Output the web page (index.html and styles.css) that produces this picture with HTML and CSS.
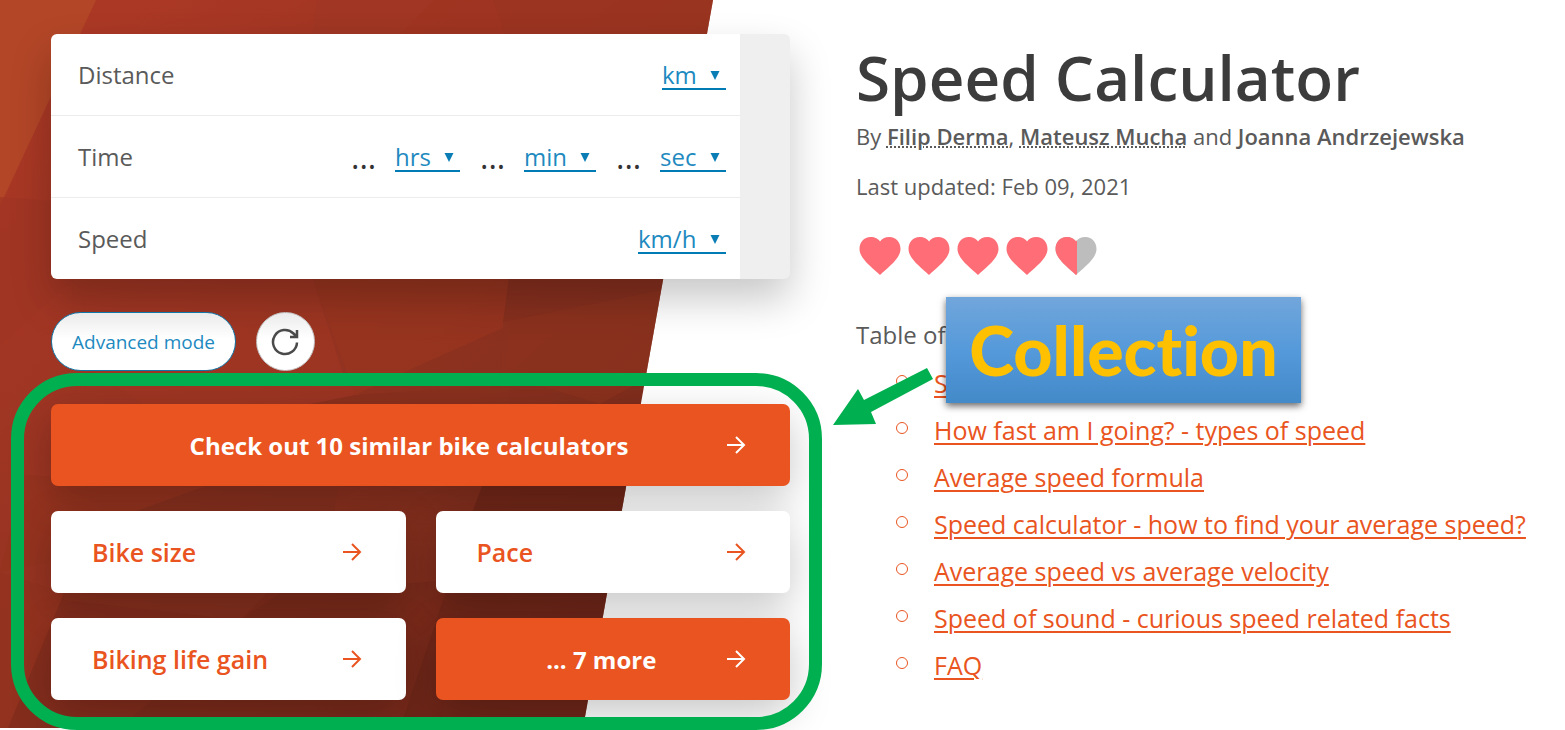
FILE: index.html
```html
<!DOCTYPE html>
<html lang="en">
<head>
<meta charset="utf-8">
<meta name="viewport" content="width=device-width, initial-scale=1">
<title>Speed Calculator</title>
<link rel="stylesheet" href="styles.css">
</head>
<body>
<svg class="symbols" aria-hidden="true">
  <symbol id="arrow" viewBox="0 0 20 20"><path d="M1 10H18M10 2l8 8-8 8" fill="none" stroke="currentColor" stroke-width="2"/></symbol>
  <symbol id="heart" viewBox="0 0 42 38"><path d="M21 38C14 31 0.500 22 0.500 12C0.500 5 5 0 11.500 0C16 0 19.500 2 21 4.500C22.500 2 26 0 30.500 0C37 0 41.500 5 41.500 12C41.500 22 28 31 21 38Z"/></symbol>
  <symbol id="caret" viewBox="0 0 10 9"><path d="M0.500 0H9.500L5 9Z" fill="currentColor"/></symbol>
</svg>
<main class="page">
  <svg class="backdrop" viewBox="0 0 713 728" preserveAspectRatio="none" aria-hidden="true">
    <defs>
      <linearGradient id="base" gradientUnits="userSpaceOnUse" x1="60" y1="60" x2="600" y2="640">
        <stop offset="0" stop-color="#ab3825"/><stop offset=".4" stop-color="#9a3422"/><stop offset=".7" stop-color="#87301e"/><stop offset="1" stop-color="#752a1b"/>
      </linearGradient>
      <clipPath id="edge"><path d="M0 0H713L583 728H0Z"/></clipPath>
    </defs>
    <g clip-path="url(#edge)">
      <path d="M0 0H713V728H0Z" fill="url(#base)"/>
      <path d="M0 0H96L5 195L0 205Z" fill="#b34627"/>
      <g opacity=".7">
        <path d="M317 0H435L400 34L340 120H300Z" fill="#a03724"/>
        <path d="M435 0H493L505 34V100H340L400 34Z" fill="#9f3421"/>
        <path d="M493 0H713V34H646L690 0L646 34H505Z" fill="#9b3421"/>
        <path d="M0 197L51 201L150 230L62 290L0 345Z" fill="#a03523"/>
        <path d="M310 270L345 380L360 395L200 440L75 360L72 270Z" fill="#a03623"/>
        <path d="M510 270L503 328L400 374L355 395L310 270Z" fill="#99351f"/>
        <path d="M503 322L670 288L655 374L600 404L501 374Z" fill="#8c321f"/>
        <path d="M503 322L510 270H670V288Z" fill="#852f1e"/>
        <path d="M355 395L501 386V404L339 500L310 404Z" fill="#89301e"/>
        <path d="M24 475L206 486L60 560L0 572Z" fill="#94331f"/>
        <path d="M0 572L64 593L8 728H0Z" fill="#93321f"/>
        <path d="M8 728L64 593L280 593L240 620L120 728Z" fill="#802c1c"/>
        <path d="M206 486L339 487L330 530L240 620L64 600L55 540Z" fill="#84301e"/>
        <path d="M482 486H640L610 728H400L440 600Z" fill="#6c2518"/>
        <path d="M280 593L450 580L400 728H120L240 620Z" fill="#782a1b"/>
      </g>
    </g>
  </svg>

  <section class="tool" aria-label="Calculator">
    <form class="calculator">
      <div class="row">
        <label for="distance-unit">Distance</label>
        <span class="unit"><select id="distance-unit"><option>km</option></select><svg><use href="#caret"/></svg></span>
      </div>
      <div class="row">
        <label for="hours">Time</label>
        <span class="times">
          <input class="value" id="hours" placeholder="..." aria-label="Hours">
          <span class="unit"><select aria-label="Hours unit"><option>hrs</option></select><svg><use href="#caret"/></svg></span>
          <input class="value" placeholder="..." aria-label="Minutes">
          <span class="unit"><select aria-label="Minutes unit"><option>min</option></select><svg><use href="#caret"/></svg></span>
          <input class="value" placeholder="..." aria-label="Seconds">
          <span class="unit"><select aria-label="Seconds unit"><option>sec</option></select><svg><use href="#caret"/></svg></span>
        </span>
      </div>
      <div class="row">
        <label for="speed-unit">Speed</label>
        <span class="unit"><select id="speed-unit"><option>km/h</option></select><svg><use href="#caret"/></svg></span>
      </div>
    </form>

    <div class="actions">
      <button class="mode" type="button">Advanced mode</button>
      <button class="reload" type="button" aria-label="Reset">
        <svg viewBox="0 0 28 28" fill="none" stroke="#4a4a4a" stroke-width="2.500"><path d="M26 14.500A12 12 0 1 1 22.500 5.500L25.500 8.500M26 2V9H19"/></svg>
      </button>
    </div>

    <nav class="collection" aria-label="Similar calculators">
      <a class="tile tile-main tile-wide" href="#all"><span>Check out 10 similar bike calculators</span><svg><use href="#arrow"/></svg></a>
      <a class="tile" href="#bike-size"><span>Bike size</span><svg><use href="#arrow"/></svg></a>
      <a class="tile" href="#pace"><span>Pace</span><svg><use href="#arrow"/></svg></a>
      <a class="tile" href="#life-gain"><span>Biking life gain</span><svg><use href="#arrow"/></svg></a>
      <a class="tile tile-main" href="#more"><span>... 7 more</span><svg><use href="#arrow"/></svg></a>
      <div class="outline"></div>
    </nav>
  </section>

  <article class="article">
    <h1>Speed Calculator</h1>
    <p class="meta">By <a href="#filip">Filip Derma</a>, <a href="#mateusz">Mateusz Mucha</a> and <strong>Joanna Andrzejewska</strong></p>
    <p class="meta updated">Last updated: Feb 09, 2021</p>
    <div class="rating" role="img" aria-label="Rating 4.5 of 5">
      <svg><use href="#heart"/></svg>
      <svg><use href="#heart"/></svg>
      <svg><use href="#heart"/></svg>
      <svg><use href="#heart"/></svg>
      <svg viewBox="0 0 42 38"><clipPath id="half"><path d="M0 0H22V38H0Z"/></clipPath><use href="#heart" fill="#bdbdbd"/><g clip-path="url(#half)"><use href="#heart"/></g></svg>
    </div>
    <div class="contents">
      <h2>Table of contents:</h2>
      <ul>
        <li><a href="#s1">Speed definition</a></li>
        <li><a href="#s2">How fast am I going? - types of speed</a></li>
        <li><a href="#s3">Average speed formula</a></li>
        <li><a href="#s4">Speed calculator - how to find your average speed?</a></li>
        <li><a href="#s5">Average speed vs average velocity</a></li>
        <li><a href="#s6">Speed of sound - curious speed related facts</a></li>
        <li><a href="#s7">FAQ</a></li>
      </ul>
      <div class="callout">Collection</div>
      <svg class="pointer" viewBox="0 0 100 58" aria-hidden="true"><path d="M0 58L25 22L31 33L94 1L100 12L38 45L43 57Z" fill="#00b050"/></svg>
    </div>
  </article>
</main>
</body>
</html>
```

FILE: styles.css
```css
*, *::before { box-sizing: border-box; }

body {
  min-height: 100vh;
  margin: 0;
  background: #fff;
  color: #5a5a5a;
  font-family: "Open Sans", "Noto Sans", sans-serif;
  font-size: 24px;
}

h1, h2, p, ul { margin: 0; }

.symbols { position: absolute; width: 0; height: 0; }

.page {
  position: relative;
  display: grid;
  grid-template-columns: 739fr 709fr;
  column-gap: 66px;
  padding: 34px 0 28px 51px;
}

.backdrop {
  position: absolute;
  z-index: -1;
  top: 0;
  left: 0;
  width: 45.56%;
  height: 100%;
}

.calculator {
  border-right: 50px solid #efefef;
  border-radius: 6px;
  background: #fff;
  box-shadow: 0 20px 40px rgba(0, 0, 0, .22);
}

.row {
  display: flex;
  align-items: center;
  justify-content: space-between;
  height: 82px;
  padding: 0 14px 0 27px;
}

.row:first-child { height: 81px; }

.row + .row { border-top: 1px solid #ececec; }

.times { display: flex; align-items: center; }

.unit {
  position: relative;
  color: #0a7db5;
}

.unit select {
  display: block;
  height: 30px;
  padding: 2px 29px 0 0;
  border: 0;
  border-bottom: 2px solid #007bb3;
  border-radius: 0;
  appearance: none;
  background: none;
  color: #1e8abf;
  font: inherit;
  line-height: 26px;
}

.unit svg {
  position: absolute;
  top: 11px;
  right: 6px;
  width: 10px;
  height: 9px;
  pointer-events: none;
}

.value {
  width: 28px;
  margin: 0 16px 0 20px;
  padding: 0;
  border: 0;
  background: none;
  font: 32px/40px "Open Sans", sans-serif;
}

.value::placeholder { color: #333; opacity: 1; }

.actions {
  display: flex;
  gap: 20px;
  margin: 33px 0;
}

.mode, .reload {
  height: 59px;
  background: linear-gradient(#ebebeb, #fff 45%);
  cursor: pointer;
}

.mode {
  padding: 0 20px;
  border: 1px solid #0f78ab;
  border-radius: 30px;
  color: #1e8abf;
  font: 19px "Open Sans", sans-serif;
}

.reload {
  display: grid;
  place-items: center;
  width: 59px;
  padding: 0;
  border: 1px solid #c4c4c4;
  border-radius: 50%;
}

.reload svg { width: 28px; height: 28px; }

.collection {
  position: relative;
  display: grid;
  grid-template-columns: 1fr 1fr;
  gap: 25px 30px;
}

.tile {
  display: flex;
  align-items: center;
  height: 82px;
  padding: 0 44px 0 41px;
  border-radius: 7px;
  background: #fff;
  box-shadow: 0 14px 40px rgba(0, 0, 0, .22);
  color: #e95420;
  font-size: 25px;
  font-weight: 600;
  text-decoration: none;
}

.tile span { flex: 1; }
.tile svg { width: 20px; height: 20px; }

.tile-main {
  background: #e95420;
  color: #fff;
  font-size: 24px;
  font-weight: 700;
  text-align: center;
}

.tile-wide { grid-column: 1 / -1; }

.outline {
  position: absolute;
  inset: -31px -32px -30px -40px;
  border: 13px solid #00b050;
  border-radius: 66px;
  pointer-events: none;
}

h1 {
  color: #3c3c3c;
  font-size: 62px;
  font-weight: 600;
  line-height: 86px;
}

.meta { font-size: 22px; line-height: 32px; }

.meta a {
  color: inherit;
  font-weight: 600;
  text-decoration: underline dotted 2px;
}

.meta strong { font-weight: 600; }

.updated { margin-top: 18px; }

.rating {
  display: flex;
  gap: 7px;
  margin: 35px 0 0 3px;
  fill: #ff6e76;
}

.rating svg { width: 42px; height: 38px; }

.contents { position: relative; margin-top: 40px; }

h2 {
  font-size: 24px;
  font-weight: 400;
  line-height: 40px;
}

.contents ul { padding: 5px 0 0 78px; list-style: none; }

.contents li {
  position: relative;
  font-size: 25px;
  line-height: 47px;
  white-space: nowrap;
}

.contents li::before {
  content: "";
  position: absolute;
  top: 15px;
  left: -38px;
  width: 12px;
  height: 12px;
  border: 1px solid #e95420;
  border-radius: 50%;
}

.contents a {
  color: #e95420;
  text-decoration-thickness: 2px;
  text-underline-offset: 3px;
}

.callout {
  position: absolute;
  top: -18px;
  left: 90px;
  width: 355px;
  background: linear-gradient(#71a6db, #5499da 52%, #438ac9);
  box-shadow: 0 3px 7px rgba(0, 0, 0, .6);
  color: #ffc000;
  font: 900 68px/106px Lato, sans-serif;
  font-variant-ligatures: none;
  text-align: center;
}

.pointer {
  position: absolute;
  top: 52px;
  left: -23px;
  width: 100px;
  height: 58px;
}
```
